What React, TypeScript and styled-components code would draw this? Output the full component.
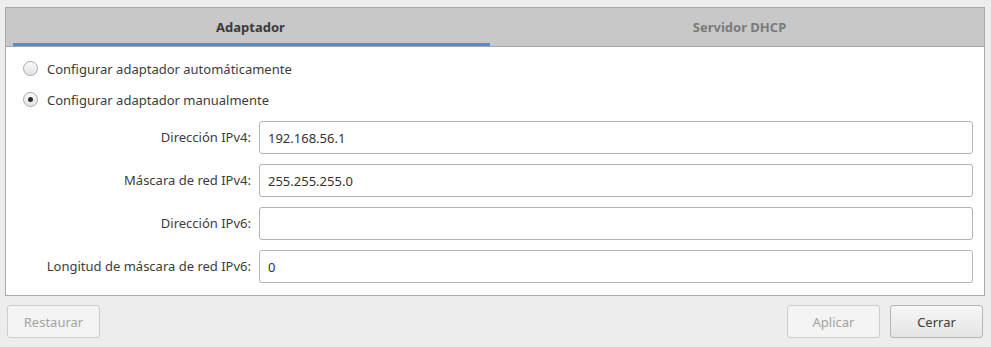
import React, { useState } from "react";
import styled, { createGlobalStyle } from "styled-components";

const Global = createGlobalStyle`
  html, body { margin: 0; padding: 0; background: #ededed; }
  body { font-family: "Noto Sans", "Open Sans", sans-serif; font-size: 13px; color: #3c3c3c; }
  * { box-sizing: border-box; }
`;

const Page = styled.div`
  width: 991px;
  height: 347px;
  padding: 7px 6px 0 5px;
  display: flex;
  flex-direction: column;
  background: #ededed;
`;

const Panel = styled.div`
  height: 289px;
  border: 1px solid #a9a9a9;
  background: #ffffff;
  display: flex;
  flex-direction: column;
`;

const TabBar = styled.div`
  display: grid;
  grid-template-columns: 1fr 1fr;
  height: 39px;
  background: #c8c8c8;
  border-bottom: 1px solid #a6a6a6;
`;

const Tab = styled.div<{ $active?: boolean }>`
  position: relative;
  display: flex;
  align-items: center;
  justify-content: center;
  font-weight: 700;
  font-size: 13px;
  color: ${(p) => (p.$active ? "#3a3a3a" : "#7a7a7a")};
  padding-bottom: 1px;
  &::after {
    content: "";
    display: ${(p) => (p.$active ? "block" : "none")};
    position: absolute;
    left: 7px;
    right: 5px;
    bottom: 0;
    height: 3px;
    background: #4a90d9;
  }
`;

const Body = styled.div`
  display: flex;
  flex-direction: column;
  padding: 6px 11px 0 17px;
`;

const RadioRow = styled.label`
  display: flex;
  align-items: center;
  gap: 9px;
  height: 31px;
  color: #3c3c3c;
`;

const RadioCircle = styled.span<{ $checked?: boolean }>`
  width: 15px;
  height: 15px;
  border-radius: 50%;
  border: 1px solid #a8a8a8;
  background: linear-gradient(#fafafa, #e2e2e2);
  display: flex;
  align-items: center;
  justify-content: center;
  &::after {
    content: "";
    display: ${(p) => (p.$checked ? "block" : "none")};
    width: 5px;
    height: 5px;
    border-radius: 50%;
    background: #2e2e2e;
  }
`;

const Form = styled.div`
  display: grid;
  grid-template-columns: 228px 1fr;
  column-gap: 8px;
  row-gap: 10px;
  margin-top: 6px;
`;

const Label = styled.div`
  text-align: right;
  align-self: center;
  color: #3c3c3c;
  padding-bottom: 1px;
`;

const Input = styled.div`
  height: 33px;
  border: 1px solid #b3b3b3;
  border-radius: 3px;
  background: #fff;
  display: flex;
  align-items: center;
  padding: 0 8px;
  color: #333;
`;

const Footer = styled.div`
  display: flex;
  align-items: center;
  justify-content: space-between;
  padding: 9px 0 0 2px;
`;

const Group = styled.div`
  display: flex;
  gap: 10px;
  margin-right: 2px;
`;

const Button = styled.button<{ $disabled?: boolean }>`
  width: 93px;
  height: 33px;
  border: 1px solid ${(p) => (p.$disabled ? "#cdcdcd" : "#b5b5b5")};
  border-radius: 3px;
  background: ${(p) => (p.$disabled ? "#f4f4f4" : "linear-gradient(#f7f7f7, #e4e4e4)")};
  font-family: "Noto Sans", "Open Sans", sans-serif;
  font-size: 13px;
  color: ${(p) => (p.$disabled ? "#a3a3a3" : "#3c3c3c")};
  padding: 0;
`;

const fields = [
  { label: "Dirección IPv4:", value: "192.168.56.1" },
  { label: "Máscara de red IPv4:", value: "255.255.255.0" },
  { label: "Dirección IPv6:", value: "" },
  { label: "Longitud de máscara de red IPv6:", value: "0" },
];

export default function App() {
  const [manual] = useState(true);
  return (
    <>
      <Global />
      <Page>
        <Panel>
          <TabBar>
            <Tab $active>Adaptador</Tab>
            <Tab>Servidor DHCP</Tab>
          </TabBar>
          <Body>
            <RadioRow>
              <RadioCircle $checked={!manual} />
              Configurar adaptador automáticamente
            </RadioRow>
            <RadioRow>
              <RadioCircle $checked={manual} />
              Configurar adaptador manualmente
            </RadioRow>
            <Form>
              {fields.map((f) => (
                <React.Fragment key={f.label}>
                  <Label>{f.label}</Label>
                  <Input>{f.value}</Input>
                </React.Fragment>
              ))}
            </Form>
          </Body>
        </Panel>
        <Footer>
          <Button $disabled>Restaurar</Button>
          <Group>
            <Button $disabled>Aplicar</Button>
            <Button>Cerrar</Button>
          </Group>
        </Footer>
      </Page>
    </>
  );
}
